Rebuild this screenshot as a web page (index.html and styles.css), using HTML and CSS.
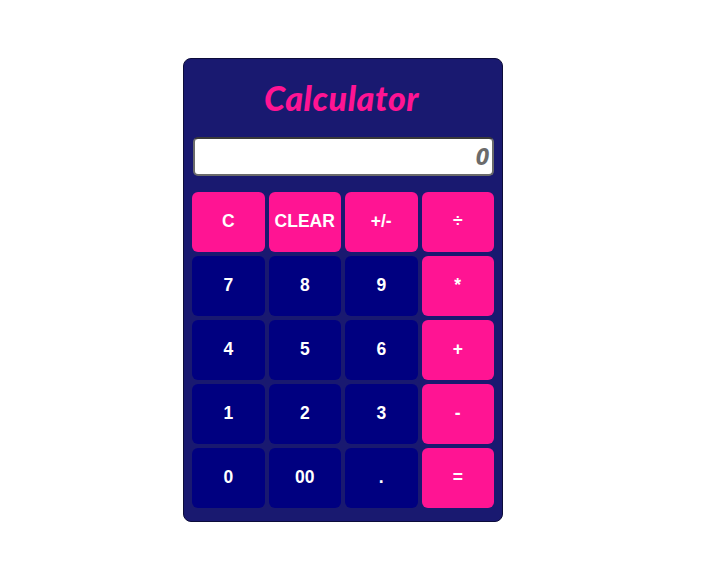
FILE: index.html
```html
<!DOCTYPE html>
<html>
<head>
<meta charset="utf-8">
<link rel="stylesheet" href="styles.css">
</head>
<body>
<div class="calc">
  <h1 class="title">Calculator</h1>
  <div class="display">0</div>
  <div class="keys">
    <button class="key op">C</button>
    <button class="key op">CLEAR</button>
    <button class="key op">+/-</button>
    <button class="key op">÷</button>
    <button class="key">7</button>
    <button class="key">8</button>
    <button class="key">9</button>
    <button class="key op">*</button>
    <button class="key">4</button>
    <button class="key">5</button>
    <button class="key">6</button>
    <button class="key op">+</button>
    <button class="key">1</button>
    <button class="key">2</button>
    <button class="key">3</button>
    <button class="key op">-</button>
    <button class="key">0</button>
    <button class="key">00</button>
    <button class="key">.</button>
    <button class="key op">=</button>
  </div>
</div>
</body>
</html>
```
FILE: styles.css
```css
html, body {
  margin: 0;
  padding: 0;
  background: #ffffff;
}
body {
  padding: 58px 0 0 183px;
}
.calc {
  box-sizing: border-box;
  width: 320px;
  height: 464px;
  background: #191970;
  border: 1px solid #0c0c3a;
  border-radius: 8px;
  padding: 0 7px 0 8px;
}
.title {
  margin: 0;
  height: 78px;
  display: flex;
  align-items: center;
  justify-content: center;
  padding: 0 4px 2px 0;
  box-sizing: border-box;
  font-family: Lato, "Open Sans", sans-serif;
  font-style: italic;
  font-weight: 900;
  font-size: 34px;
  letter-spacing: 0.6px;
  color: #ff1493;
}
.display {
  box-sizing: border-box;
  margin-left: 1px;
  width: 301px;
  height: 39px;
  background: #fff;
  border: 2px solid #6b6b6b;
  border-top-color: #3a3a3a;
  border-radius: 5px;
  text-align: right;
  padding-right: 3px;
  font-family: "Open Sans", Lato, sans-serif;
  font-style: italic;
  font-weight: 700;
  font-size: 24px;
  line-height: 34px;
  color: #6b6b6b;
}
.keys {
  width: 302px;
  margin-top: 16px;
  display: grid;
  grid-template-columns: repeat(4, 1fr);
  grid-auto-rows: 60px;
  gap: 4px;
}
.key {
  border: none;
  border-radius: 6px;
  background: #000080;
  color: #ffffff;
  font-family: "Liberation Sans", Arial, sans-serif;
  font-weight: 700;
  font-size: 17.5px;
  padding: 0 0 2px 0;
  margin: 0;
}
.key.op {
  background: #ff1493;
}
```
